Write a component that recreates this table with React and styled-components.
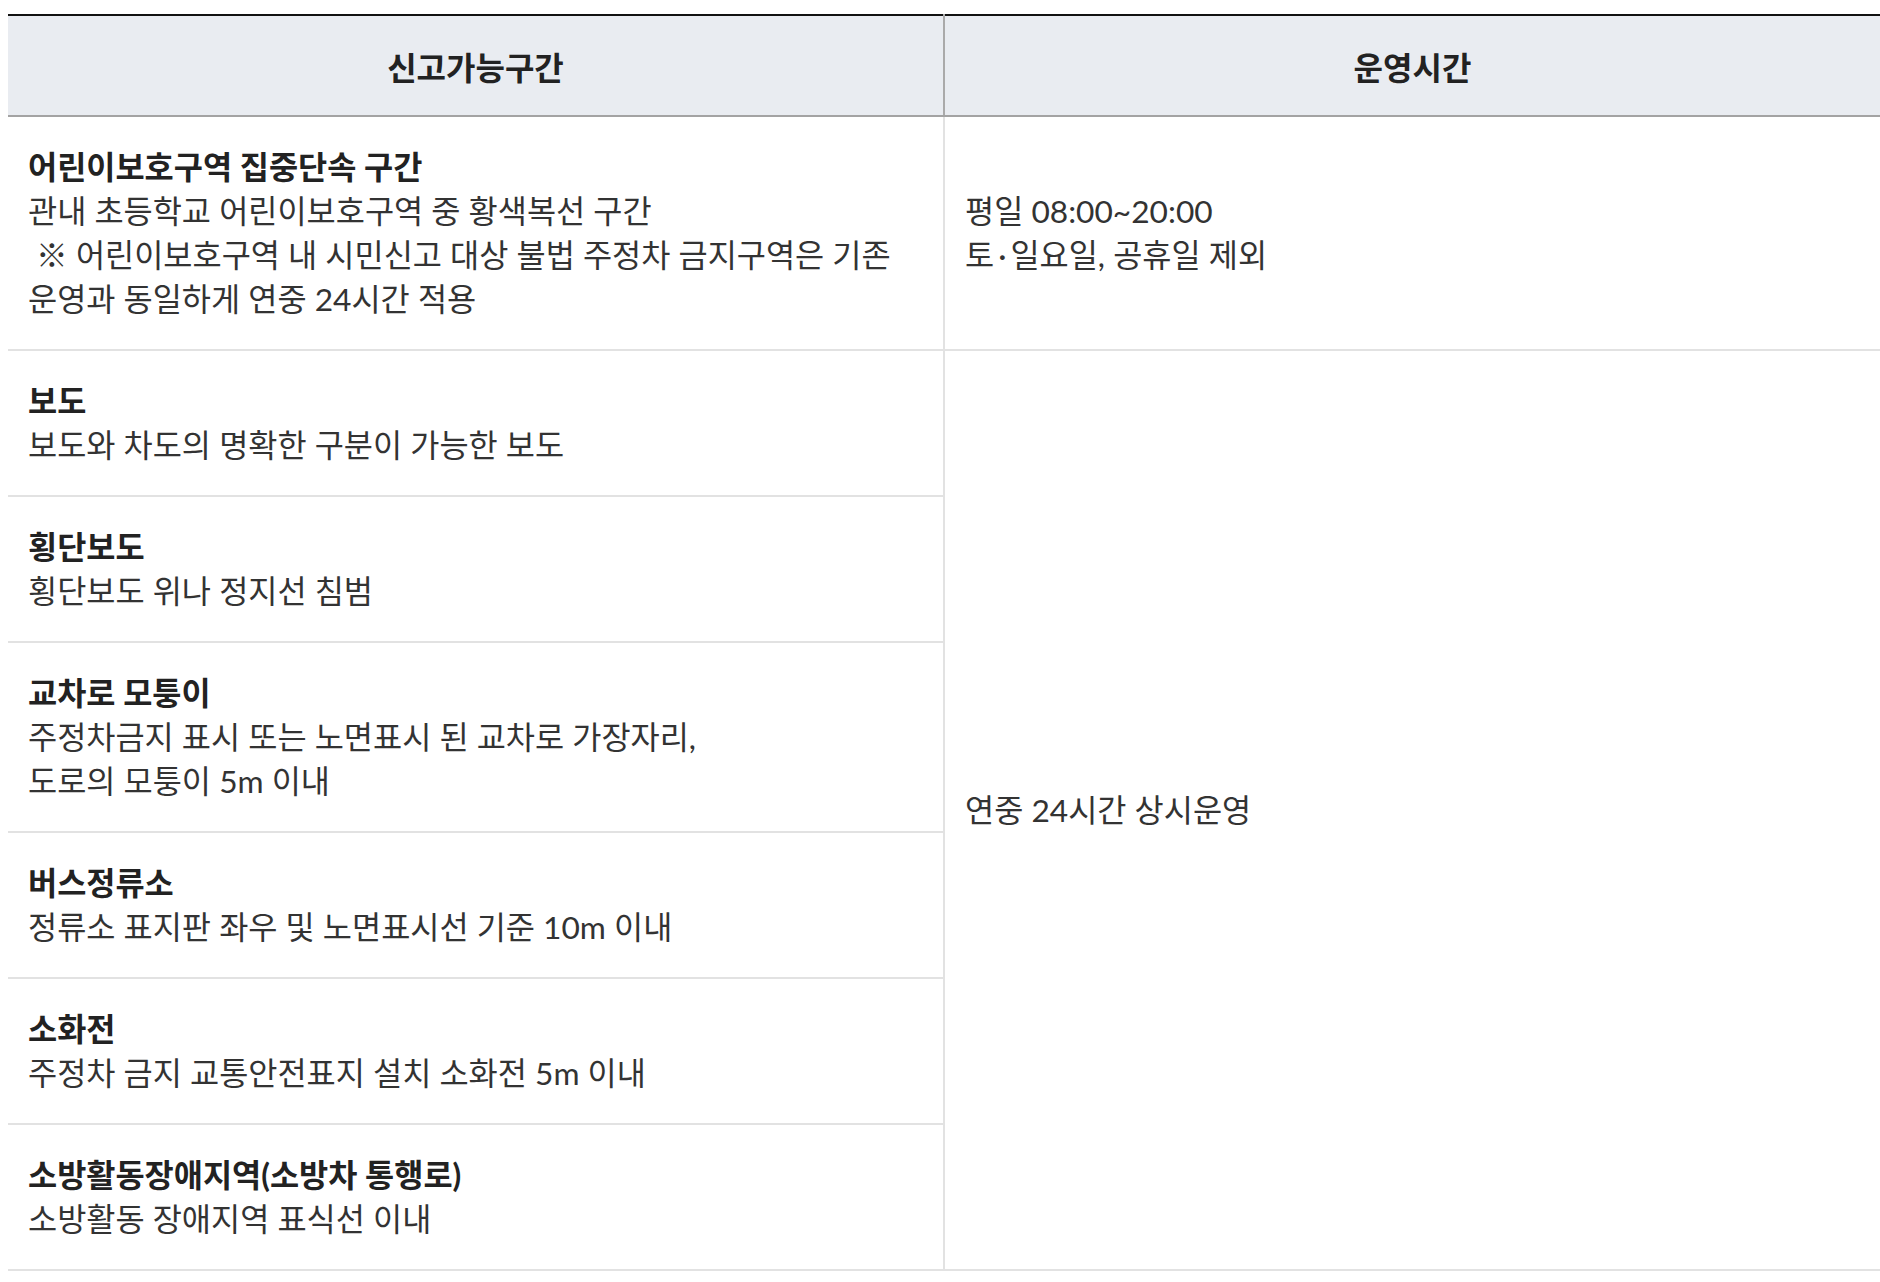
import styled, { createGlobalStyle } from "styled-components";

const GlobalStyle = createGlobalStyle`
  html, body {
    margin: 0;
    padding: 0;
    overflow-x: hidden;
    background: #fff;
  }
  body {
    font-family: Lato, "Noto Sans CJK KR", sans-serif;
    color: #333;
  }
`;

const Wrapper = styled.div`
  padding: 14px 0 0 8px;
`;

const Table = styled.table`
  width: 1872px;
  border-collapse: collapse;
  table-layout: fixed;
  border-top: 2px solid #111;
`;

const HeadCell = styled.th`
  width: 50%;
  height: 99px;
  padding: 0;
  background: #e9ecf1;
  border-bottom: 2px solid #a3a3a3;
  border-left: ${(p) => (p.$first ? "none" : "2px solid #aaa")};
  font-size: 32px;
  font-weight: 700;
  color: #222;
  text-align: center;
  vertical-align: middle;
`;

const Cell = styled.td`
  padding: 28px 20px;
  border-bottom: 2px solid #e2e2e2;
  border-left: ${(p) => (p.$first ? "none" : "2px solid #e2e2e2")};
  font-size: 31.7px;
  line-height: 44px;
  text-align: left;
  vertical-align: middle;
`;

const Title = styled.strong`
  display: block;
  font-weight: 700;
  color: #222;
`;

const Line = styled.span`
  display: block;
  white-space: pre;
`;

const Dot = styled.span`
  margin: 0 4px;
`;

const zones = [
  {
    title: "어린이보호구역 집중단속 구간",
    lines: [
      "관내 초등학교 어린이보호구역 중 황색복선 구간",
      " ※ 어린이보호구역 내 시민신고 대상 불법 주정차 금지구역은 기존",
      "운영과 동일하게 연중 24시간 적용",
    ],
  },
  { title: "보도", lines: ["보도와 차도의 명확한 구분이 가능한 보도"] },
  { title: "횡단보도", lines: ["횡단보도 위나 정지선 침범"] },
  {
    title: "교차로 모퉁이",
    lines: ["주정차금지 표시 또는 노면표시 된 교차로 가장자리,", "도로의 모퉁이 5m 이내"],
  },
  { title: "버스정류소", lines: ["정류소 표지판 좌우 및 노면표시선 기준 10m 이내"] },
  { title: "소화전", lines: ["주정차 금지 교통안전표지 설치 소화전 5m 이내"] },
  { title: "소방활동장애지역(소방차 통행로)", lines: ["소방활동 장애지역 표식선 이내"] },
];

const Zone = ({ zone }) => (
  <Cell $first>
    <Title>{zone.title}</Title>
    {zone.lines.map((l, i) => (
      <Line key={i}>{l}</Line>
    ))}
  </Cell>
);

export default function App() {
  const [first, ...rest] = zones;
  return (
    <Wrapper>
      <GlobalStyle />
      <Table>
        <thead>
          <tr>
            <HeadCell $first>신고가능구간</HeadCell>
            <HeadCell>운영시간</HeadCell>
          </tr>
        </thead>
        <tbody>
          <tr>
            <Zone zone={first} />
            <Cell>
              <Line>평일 08:00~20:00</Line>
              <Line>
                토<Dot>·</Dot>일요일, 공휴일 제외
              </Line>
            </Cell>
          </tr>
          {rest.map((z, i) => (
            <tr key={z.title}>
              <Zone zone={z} />
              {i === 0 && (
                <Cell rowSpan={rest.length}>
                  <Line>연중 24시간 상시운영</Line>
                </Cell>
              )}
            </tr>
          ))}
        </tbody>
      </Table>
    </Wrapper>
  );
}
